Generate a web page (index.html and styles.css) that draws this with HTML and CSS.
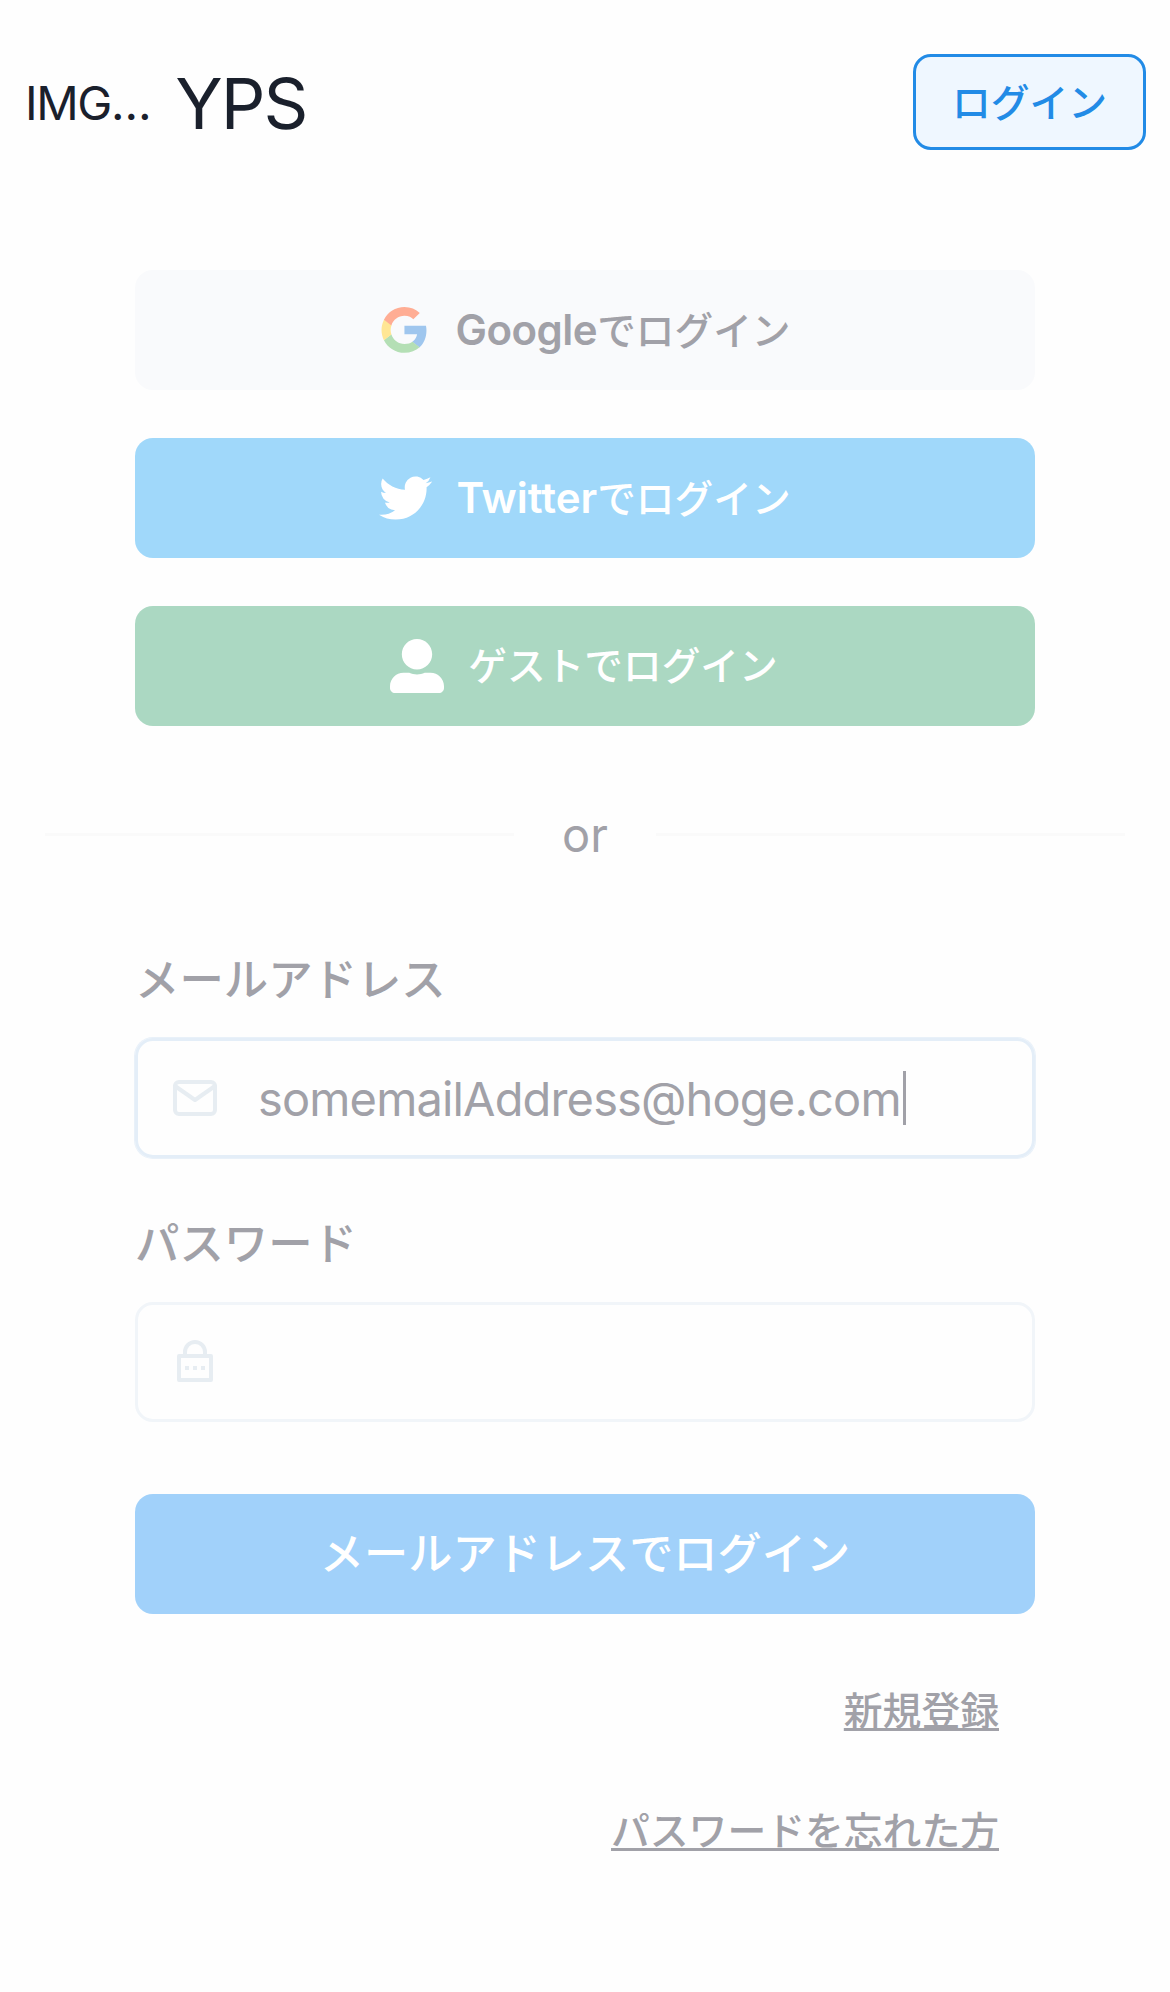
FILE: index.html
```html
<!DOCTYPE html>
<html lang="ja">
<head>
<meta charset="utf-8">
<title>YPS</title>
<link rel="stylesheet" href="styles.css">
</head>
<body>
<header class="header">
  <div class="brand"><span class="logo">IMG…</span><span class="name">YPS</span></div>
  <button class="login">ログイン</button>
</header>
<main class="main">
  <div class="providers">
    <button class="btn google">
      <svg class="icon-google" viewBox="0 0 256 262"><path fill="#9fc6ee" d="M255.878 133.451c0-10.734-.871-18.567-2.756-26.69H130.55v48.448h71.947c-1.45 12.04-9.283 30.172-26.69 42.356l-.244 1.622 38.755 30.023 2.685.268c24.659-22.774 38.875-56.282 38.875-96.027"/><path fill="#b4dfb5" d="M130.55 261.1c35.248 0 64.839-11.605 86.453-31.622l-41.196-31.913c-11.024 7.688-25.82 13.055-45.257 13.055-34.523 0-63.824-22.773-74.269-54.25l-1.531.13-40.298 31.187-.527 1.465C35.393 231.798 79.49 261.1 130.55 261.1"/><path fill="#ffe694" d="M56.281 156.37c-2.756-8.123-4.351-16.827-4.351-25.82 0-8.994 1.595-17.697 4.206-25.82l-.073-1.73L15.26 71.312l-1.335.635C5.077 89.644 0 109.517 0 130.55s5.077 40.905 13.925 58.602l42.356-32.782"/><path fill="#ffad94" d="M130.55 50.479c24.514 0 41.05 10.589 50.479 19.438l36.844-35.974C195.245 12.91 165.798 0 130.55 0 79.49 0 35.393 29.301 13.925 71.947l42.211 32.783c10.59-31.477 39.891-54.251 74.414-54.251"/></svg>
      <span><span class="latin">Google</span>でログイン</span>
    </button>
    <button class="btn twitter">
      <svg class="icon-twitter" viewBox="0 2.2 24 19.6"><path fill="#fff" d="M23.953 4.57a10 10 0 01-2.825.775 4.958 4.958 0 002.163-2.723c-.951.555-2.005.959-3.127 1.184a4.92 4.92 0 00-8.384 4.482C7.69 8.095 4.067 6.13 1.64 3.162a4.822 4.822 0 00-.666 2.475c0 1.71.87 3.213 2.188 4.096a4.904 4.904 0 01-2.228-.616v.06a4.923 4.923 0 003.946 4.827 4.996 4.996 0 01-2.212.085 4.936 4.936 0 004.604 3.417 9.867 9.867 0 01-6.102 2.105c-.39 0-.779-.023-1.17-.067a13.995 13.995 0 007.557 2.209c9.053 0 13.998-7.496 13.998-13.985 0-.21 0-.42-.015-.63A9.935 9.935 0 0024 4.59z"/></svg>
      <span><span class="latin">Twitter</span>でログイン</span>
    </button>
    <button class="btn guest">
      <svg class="icon-user" viewBox="0 0 512 512"><path fill="#fff" d="M256 288c79.5 0 144-64.5 144-144S335.5 0 256 0 112 64.5 112 144s64.5 144 144 144zm128 32h-55.1c-22.2 10.2-46.9 16-72.9 16s-50.6-5.8-72.9-16H128C57.3 320 0 377.3 0 448v16c0 26.5 21.5 48 48 48h416c26.5 0 48-21.5 48-48v-16c0-70.7-57.3-128-128-128z"/></svg>
      <span>ゲストでログイン</span>
    </button>
  </div>
  <div class="divider"><span>or</span></div>
  <form class="form">
    <label class="label">メールアドレス</label>
    <div class="field focused">
      <svg class="icon-field" viewBox="0 0 24 24" fill="none" stroke="#e7edf2" stroke-width="2" stroke-linecap="round" stroke-linejoin="round"><path d="M4 4h16c1.1 0 2 .9 2 2v12c0 1.1-.9 2-2 2H4c-1.1 0-2-.9-2-2V6c0-1.1.9-2 2-2z"/><path d="M22 6l-10 7L2 6"/></svg>
      <span class="value">somemailAddress@hoge.com</span><span class="caret"></span>
    </div>
    <label class="label second">パスワード</label>
    <div class="field">
      <svg class="icon-field" viewBox="0 0 24 24"><path fill="#e7edf2" d="M18 8h2a1 1 0 0 1 1 1v12a1 1 0 0 1-1 1H4a1 1 0 0 1-1-1V9a1 1 0 0 1 1-1h2V7a6 6 0 1 1 12 0v1zM5 10v10h14V10H5zm6 4h2v2h-2v-2zm-4 0h2v2H7v-2zm8 0h2v2h-2v-2zm1-6V7a4 4 0 1 0-8 0v1h8z"/></svg>
    </div>
    <button class="btn submit" type="button">メールアドレスでログイン</button>
  </form>
  <nav class="links"><a>新規登録</a><a>パスワードを忘れた方</a></nav>
</main>
</body>
</html>
```

FILE: styles.css
```css
* { box-sizing: border-box; }
body {
  margin: 0;
  background: #fefefe;
  color: #1a202c;
  font-family: Inter, "Noto Sans CJK JP", sans-serif;
}
button { font-family: inherit; margin: 0; padding: 0; }
svg { display: block; flex: none; }

.header {
  height: 204px;
  padding: 0 24px 0 25px;
  display: flex;
  align-items: center;
  justify-content: space-between;
}
.brand { display: flex; align-items: center; gap: 25px; padding-top: 3px; }
.logo { font-size: 47px; line-height: 60px; letter-spacing: -1.4px; padding-bottom: 2px; }
.name { font-size: 70px; line-height: 90px; letter-spacing: -2px; }
.login {
  width: 233px;
  height: 96px;
  border: 3px solid #228be6;
  border-radius: 18px;
  background: #eff7ff;
  color: #228be6;
  padding-bottom: 4px;
  font-size: 38.8px;
  font-weight: 500;
}

.main { padding: 66px 45px 0; }
.providers { display: flex; flex-direction: column; gap: 48px; padding: 0 90px; }
.btn {
  width: 900px;
  height: 120px;
  border: 0;
  border-radius: 18px;
  display: flex;
  align-items: center;
  justify-content: center;
  color: #fff;
  font-size: 38.7px;
  font-weight: 500;
  line-height: 60px;
}
.latin { font-size: 42px; font-weight: 600; }
.google { background: #f9fafc; color: #a1a1a8; gap: 28px; }
.google .latin { letter-spacing: -0.5px; }
.google { padding-left: 2px; }
.twitter { background: #a0d8fa; gap: 24px; }
.guest { background: #abd8c2; gap: 24px; padding-right: 2px; }
.icon-google { width: 46px; height: 46px; }
.icon-twitter { width: 53px; height: 44px; }
.icon-user { width: 54px; height: 54px; }

.divider {
  margin-top: 72px;
  height: 72px;
  display: flex;
  align-items: center;
  gap: 48px;
  color: #a1a1a8;
  font-size: 47px;
}
.divider::before, .divider::after {
  content: "";
  flex: 1;
  height: 3px;
  background: #fafafa;
}

.form { padding: 78px 90px 0; display: flex; flex-direction: column; }
.label {
  height: 66px;
  margin-bottom: 24px;
  line-height: 64px;
  font-size: 44.4px;
  font-weight: 500;
  color: #a1a1a8;
}
.label.second { margin-top: 54px; }
.field {
  height: 120px;
  border: 3px solid #f1f5f9;
  border-radius: 18px;
  padding-left: 33px;
  display: flex;
  align-items: center;
}
.focused { border-color: #e4eef8; box-shadow: 0 0 0 1px #e9f1f9; }
.icon-field { width: 48px; height: 48px; }
.value { margin-left: 39px; font-size: 47px; letter-spacing: -0.85px; color: #a1a1a8; }
.caret { width: 3px; height: 54px; background: #a1a1a8; margin-left: 2px; }
.submit { margin-top: 72px; background: #a1d1fa; font-size: 44.2px; }

.links {
  padding: 67px 126px 0 0;
  display: flex;
  flex-direction: column;
  align-items: flex-end;
  gap: 60px;
  color: #a1a1a8;
  font-size: 38.8px;
  font-weight: 500;
  line-height: 60px;
}
.links a { text-decoration: underline; text-decoration-thickness: 3px; text-underline-offset: 3px; }
```
